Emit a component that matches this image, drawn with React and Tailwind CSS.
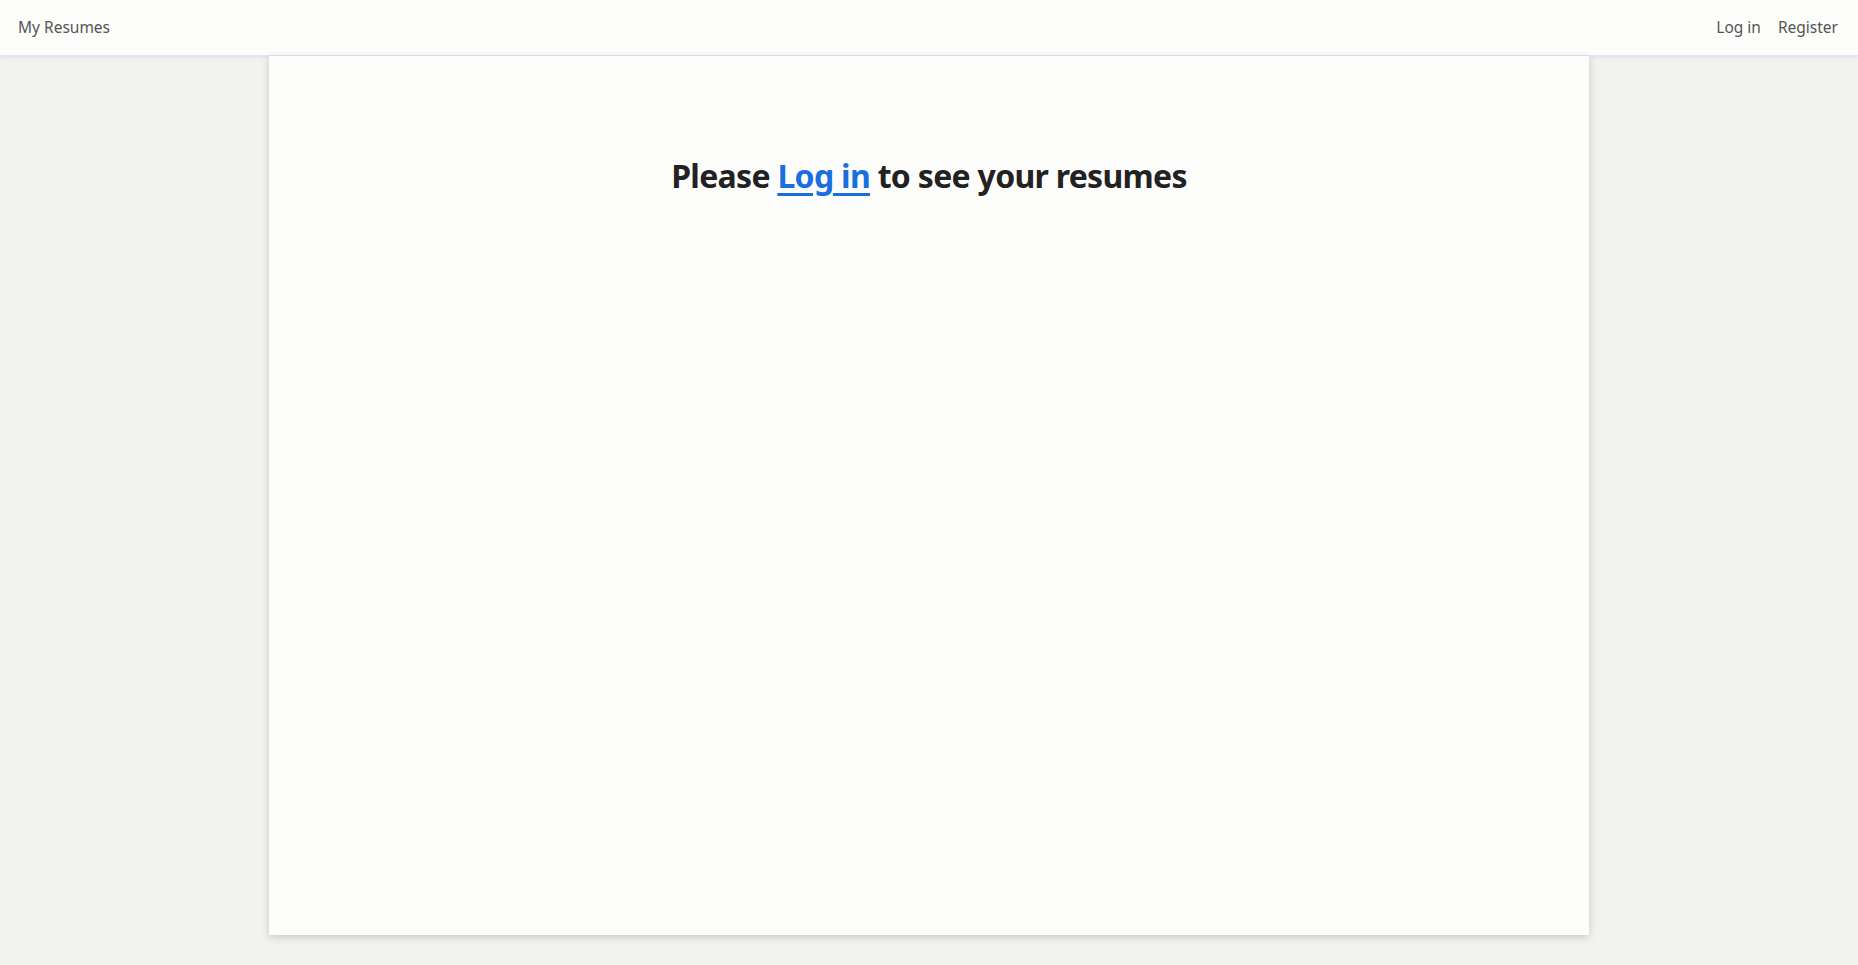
import React from "react";

const App = () => {
  return (
    <div
      className="flex min-h-screen w-full flex-col bg-[#f2f2f1]"
      style={{ fontFamily: '"Noto Sans", "Open Sans", sans-serif' }}
    >
      {/* header */}
      <header className="flex h-[56px] items-center justify-between border-b border-[#e4e4f4] bg-[#fdfdfb] px-[18px] text-[15.5px] text-[#555555] shadow-[0_1px_3px_rgba(200,200,235,0.5)]">
        <a href="#" className="hover:text-gray-800">
          My Resumes
        </a>
        <nav className="flex items-center gap-[17px] pr-[2px]">
          <a href="#" className="hover:text-gray-800">
            Log in
          </a>
          <a href="#" className="hover:text-gray-800">
            Register
          </a>
        </nav>
      </header>

      {/* content */}
      <main className="flex justify-center">
        <div className="h-[879px] w-[1320px] bg-[#fdfdfb] pt-[96px] shadow-[0_2px_8px_rgba(0,0,0,0.18)]">
          <h1 className="text-center text-[32px] font-bold tracking-[-0.7px] text-[#222222]">
            Please{" "}
            <a href="#" className="text-[#1a6fe0] underline underline-offset-[5px]">
              Log in
            </a>{" "}
            to see your resumes
          </h1>
        </div>
      </main>
    </div>
  );
};

export default App;
